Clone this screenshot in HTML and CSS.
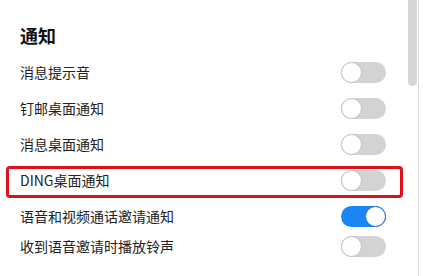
FILE: index.html
```html
<!DOCTYPE html>
<html lang="zh">
<head>
<meta charset="utf-8">
<link rel="stylesheet" href="styles.css">
</head>
<body>
<div class="page">
  <div class="content">
    <h2 class="title">通知</h2>
    <div class="row"><span class="label">消息提示音</span><span class="switch"><span class="knob"></span></span></div>
    <div class="row"><span class="label">钉邮桌面通知</span><span class="switch"><span class="knob"></span></span></div>
    <div class="row"><span class="label">消息桌面通知</span><span class="switch"><span class="knob"></span></span></div>
    <div class="row row-marked"><span class="label">DING桌面通知</span><span class="switch"><span class="knob"></span></span><span class="mark"></span></div>
    <div class="row"><span class="label">语音和视频通话邀请通知</span><span class="switch on"><span class="knob"></span></span></div>
    <div class="row row-last"><span class="label">收到语音邀请时播放铃声</span><span class="switch"><span class="knob"></span></span></div>
  </div>
  <div class="scrollbar"><div class="thumb"></div></div>
  <div class="edge"></div>
</div>
</body>
</html>
```
FILE: styles.css
```css
html, body {
  margin: 0;
  padding: 0;
  background: #ffffff;
}
body {
  font-family: "Noto Sans CJK SC", "Noto Sans", sans-serif;
  color: #222222;
  width: 423px;
  height: 276px;
  overflow: hidden;
}
.page {
  display: flex;
  height: 276px;
}
.content {
  width: 408px;
  flex: none;
}
.title {
  margin: 23px 0 7px 20px;
  font-size: 18px;
  line-height: 24px;
  font-weight: 700;
  color: #111111;
}
.row {
  position: relative;
  display: flex;
  align-items: center;
  justify-content: space-between;
  height: 36px;
  padding: 0 22px 0 20px;
}
.row-last {
  height: 30px;
  margin-top: -3px;
}
.label {
  font-size: 14px;
  line-height: 20px;
  color: #222222;
}
.switch {
  position: relative;
  display: block;
  width: 45px;
  height: 21px;
  border-radius: 11px;
  background: #d3d3d3;
  flex: none;
}
.knob {
  position: absolute;
  left: 0;
  top: 0;
  width: 21px;
  height: 21px;
  box-sizing: border-box;
  border-radius: 50%;
  background: #ffffff;
  border: 1.5px solid #c2c2c2;
}
.switch.on {
  background: #1a86f4;
}
.switch.on .knob {
  left: auto;
  right: 0;
  border: 1.5px solid #1570d6;
}
.mark {
  position: absolute;
  left: 6px;
  right: 5px;
  top: 4px;
  height: 32px;
  box-sizing: border-box;
  border: 3px solid #e0101a;
  border-radius: 4px;
  pointer-events: none;
}
.scrollbar {
  width: 10px;
  flex: none;
}
.thumb {
  width: 9px;
  height: 86px;
  background: #d6d6d6;
  border-radius: 0 0 5px 5px;
}
.edge {
  width: 1px;
  flex: none;
  background: #dcdcdc;
}
```
